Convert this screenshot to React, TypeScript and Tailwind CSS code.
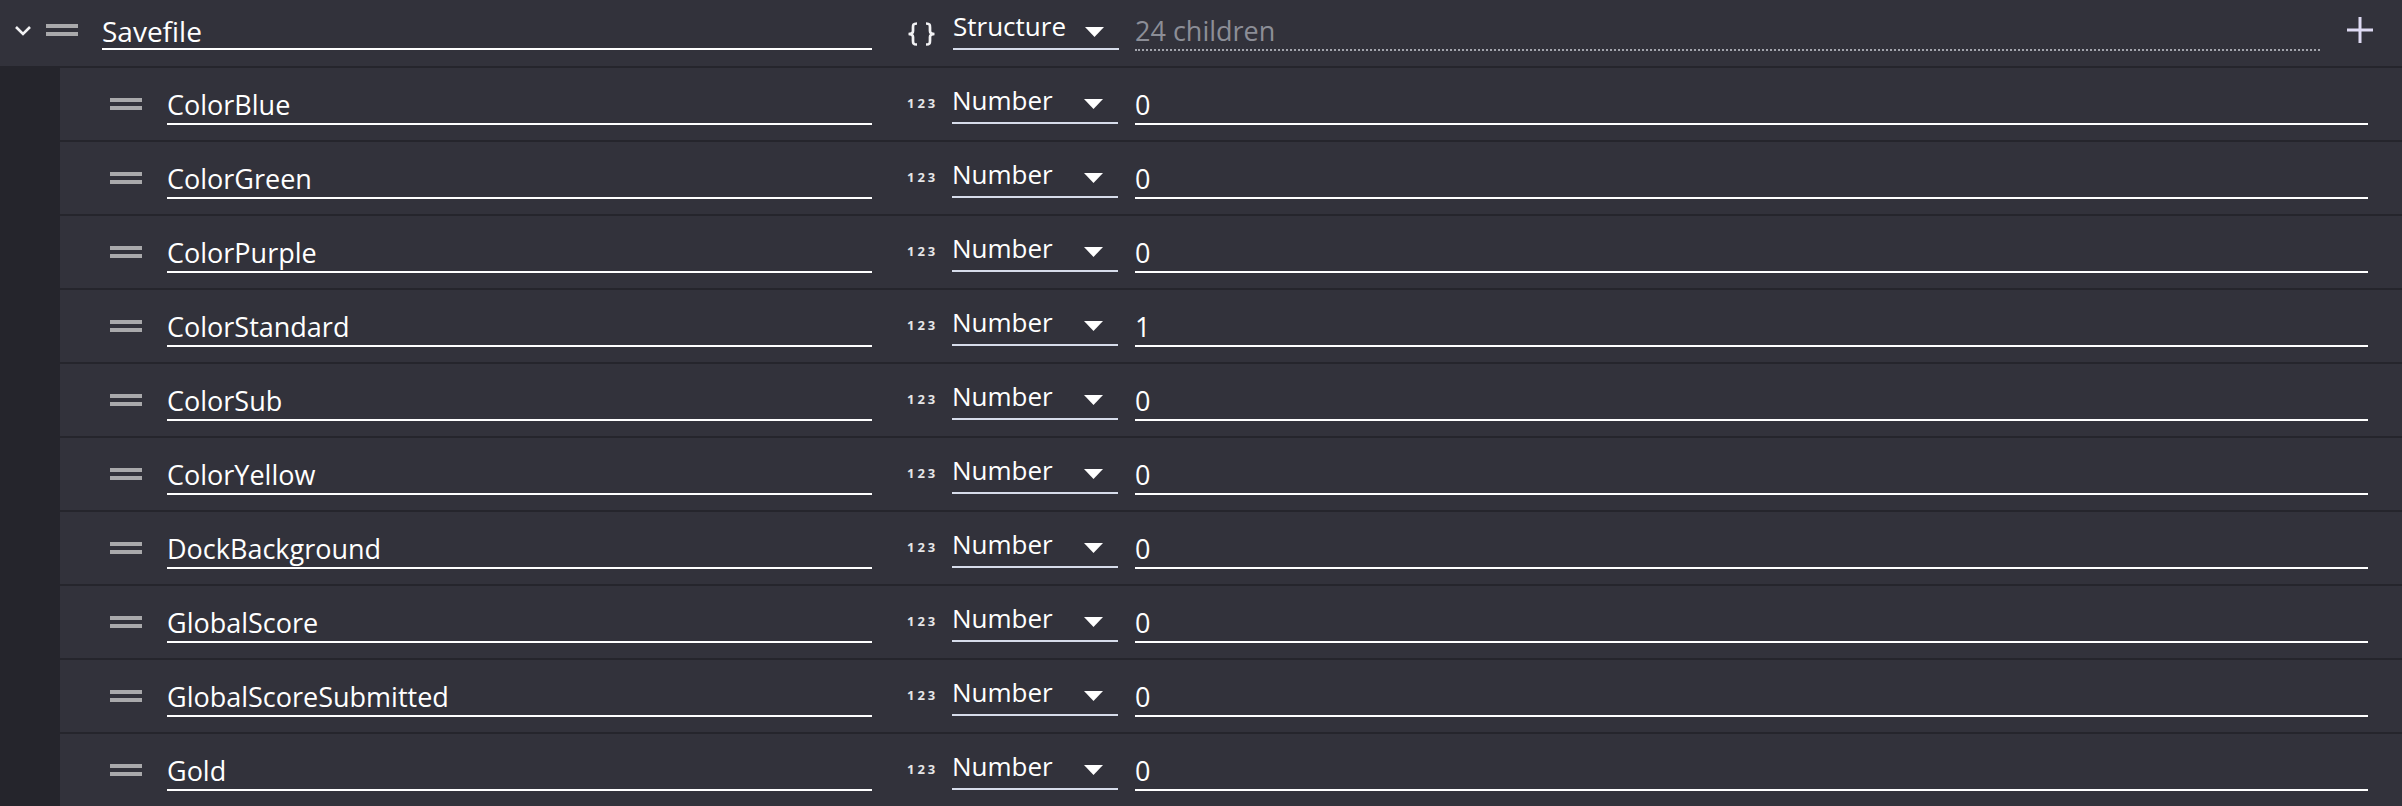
import React from "react";

const fields = [
  { name: "ColorBlue", value: "0" },
  { name: "ColorGreen", value: "0" },
  { name: "ColorPurple", value: "0" },
  { name: "ColorStandard", value: "1" },
  { name: "ColorSub", value: "0" },
  { name: "ColorYellow", value: "0" },
  { name: "DockBackground", value: "0" },
  { name: "GlobalScore", value: "0" },
  { name: "GlobalScoreSubmitted", value: "0" },
  { name: "Gold", value: "0" },
];

const font = { fontFamily: '"Open Sans", "Noto Sans", sans-serif' };

const DragHandle = ({ top }: { top: string }) => (
  <div className={`flex w-[32px] shrink-0 flex-col gap-[4px] ${top}`}>
    <div className="h-[4px] bg-[#a9a9ab]" />
    <div className="h-[4px] bg-[#a9a9ab]" />
  </div>
);

const Caret = ({ top }: { top: string }) => (
  <svg width="19" height="10" viewBox="0 0 19 10" className={`shrink-0 ${top}`}>
    <polygon points="0,0 19,0 9.5,10" fill="#ffffff" />
  </svg>
);

const TypeSelect = ({ label, mt, caretTop }: { label: string; mt: string; caretTop: string }) => (
  <div
    className={`ml-[17px] flex w-[166px] shrink-0 items-start justify-between border-b-2 border-[#d6dcea] pb-[7px] pr-[15px] ${mt}`}
  >
    <span className="text-[26px] leading-[30px] text-white">{label}</span>
    <Caret top={caretTop} />
  </div>
);

const Row = ({ name, value }: { name: string; value: string }) => (
  <div className="flex h-[74px] items-start border-b-2 border-[#25252c] pr-[34px]">
    <div className="ml-[50px]">
      <DragHandle top="mt-[30px]" />
    </div>
    <div className="ml-[25px] mt-[20px] w-[705px] shrink-0 border-b-2 border-white pb-[1px] text-[27px] leading-[34px] text-white">
      {name}
    </div>
    <div className="ml-[35px] mt-[29px] w-[28px] shrink-0 text-[13px] font-bold leading-none tracking-[3px] text-[#e6e6e8]">
      123
    </div>
    <TypeSelect label="Number" mt="mt-[17px]" caretTop="mt-[14px]" />
    <div className="ml-[17px] mt-[20px] flex-1 border-b-2 border-white pb-[1px] text-[27px] leading-[34px] text-white">
      {value}
    </div>
  </div>
);

export default function App() {
  return (
    <div className="h-[806px] w-full overflow-hidden bg-[#32323b]" style={font}>
      <div className="flex h-[68px] items-start border-b-2 border-[#25252c] pr-[28px]">
        <svg width="18" height="12" viewBox="0 0 18 12" className="ml-[14px] mt-[25px] shrink-0">
          <polyline points="2,2 9,9 16,2" fill="none" stroke="#f2f2f4" strokeWidth="2.6" />
        </svg>
        <div className="ml-[14px]">
          <DragHandle top="mt-[24px]" />
        </div>
        <div className="ml-[24px] mt-[14px] w-[770px] shrink-0 border-b-2 border-white pb-0 text-[28px] leading-[34px] text-white">
          Savefile
        </div>
        {/* object-type glyph */}
        <svg width="29" height="24" viewBox="0 0 29 24" className="ml-[35px] mt-[22px] shrink-0">
          <path
            d="M10 1.5 C6 1.5 6 3 6 5.5 L6 9 C6 10.8 5 12 1.5 12 C5 12 6 13.2 6 15 L6 18.5 C6 21 6 22.5 10 22.5"
            fill="none"
            stroke="#f2f2f4"
            strokeWidth="2.7"
          />
          <path
            d="M19 1.5 C23 1.5 23 3 23 5.5 L23 9 C23 10.8 24 12 27.5 12 C24 12 23 13.2 23 15 L23 18.5 C23 21 23 22.5 19 22.5"
            fill="none"
            stroke="#f2f2f4"
            strokeWidth="2.7"
          />
        </svg>
        <TypeSelect label="Structure" mt="mt-[11px]" caretTop="mt-[16px]" />
        <div className="ml-[16px] mt-[14px] flex-1 border-b-2 border-dotted border-[#a3a5ad] pb-[1px] text-[27px] leading-[34px] text-[#8c8e97]">
          24 children
        </div>
        <svg width="28" height="28" viewBox="0 0 28 28" className="ml-[26px] mt-[16px] shrink-0">
          <path d="M14 1 V27 M1 14 H27" stroke="#ddd9f2" strokeWidth="3" />
        </svg>
      </div>
      <div className="flex">
        <div className="w-[60px] shrink-0 bg-[#25252c]" />
        <div className="flex-1">
          {fields.map((f) => (
            <Row key={f.name} name={f.name} value={f.value} />
          ))}
        </div>
      </div>
    </div>
  );
}
